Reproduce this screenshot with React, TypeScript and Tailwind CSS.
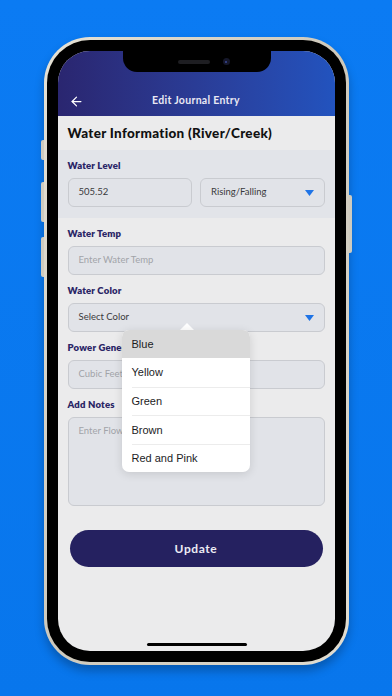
import { ArrowLeft } from 'lucide-react'

const colors = ['Blue', 'Yellow', 'Green', 'Brown', 'Red and Pink']

function Label({ children }: { children: string }) {
  return (
    <div className="h-[12px] text-[9.5px] leading-[12px] font-extrabold tracking-[0.2px] text-[#2a2566]">
      {children}
    </div>
  )
}

function Caret() {
  return (
    <svg width="9" height="6" viewBox="0 0 9 6" className="shrink-0">
      <path d="M0 0h9L4.5 6z" fill="#1f74e6" />
    </svg>
  )
}

function Field({
  text,
  muted,
  caret,
  className = '',
}: {
  text: string
  muted?: boolean
  caret?: boolean
  className?: string
}) {
  return (
    <div
      className={`flex h-[29px] items-center justify-between rounded-[6px] border border-[#c9cbd0] bg-[#e1e3e8] px-[10px] text-[9.5px] ${
        muted ? 'text-[#a2a4a9]' : 'text-[#3a3a3c]'
      } ${className}`}
    >
      <span>{text}</span>
      {caret && <Caret />}
    </div>
  )
}

export default function App() {
  return (
    <div
      className="h-[696px] w-[392px] overflow-hidden bg-gradient-to-b from-[#0b7bf3] to-[#0876ec] pt-[37px]"
      style={{ fontFamily: 'Lato, "Liberation Sans", sans-serif' }}
    >
      <div className="relative mx-auto h-[628px] w-[305px]">
        {/* side buttons */}
        <div className="absolute top-[103px] -left-[3px] h-[20px] w-[3px] rounded-l-[2px] bg-[#cfcbbf]" />
        <div className="absolute top-[145px] -left-[3px] h-[40px] w-[3px] rounded-l-[2px] bg-[#cfcbbf]" />
        <div className="absolute top-[200px] -left-[3px] h-[40px] w-[3px] rounded-l-[2px] bg-[#cfcbbf]" />
        <div className="absolute top-[158px] -right-[3px] h-[58px] w-[3px] rounded-r-[2px] bg-[#cfcbbf]" />

        <div className="h-full w-full rounded-[46px] bg-gradient-to-br from-[#e6e2d6] via-[#cdc8bb] to-[#e2ddd0] p-[3px] shadow-[0_6px_10px_rgba(0,0,0,0.25)]">
          <div className="h-full w-full rounded-[43px] bg-black p-[11px]">
            <div className="relative flex h-full w-full flex-col overflow-hidden rounded-[32px] bg-[#ebebec]">
              {/* header */}
              <div className="flex h-[65px] shrink-0 items-end bg-gradient-to-r from-[#2a2670] to-[#2253be] pb-[1px]">
                <div className="relative flex h-[28px] w-full items-center justify-center">
                  <ArrowLeft size={15} strokeWidth={2} className="absolute left-[11px] text-white" />
                  <span className="text-[10.5px] font-bold tracking-[0.3px] text-[#e9e8f3]">
                    Edit Journal Entry
                  </span>
                </div>
              </div>

              {/* notch */}
              <div className="absolute top-0 left-[65px] flex h-[21px] w-[148px] items-center justify-center gap-[13px] rounded-b-[14px] bg-black pl-[14px]">
                <div className="h-[4px] w-[32px] rounded-full bg-[#1e1e22]" />
                <div className="flex h-[7px] w-[7px] items-center justify-center rounded-full bg-[#15172a]">
                  <div className="h-[2px] w-[2px] rounded-full bg-[#3a4a9a]" />
                </div>
              </div>

              {/* section title */}
              <div className="flex h-[34px] shrink-0 items-center px-[10px] text-[13.5px] font-black tracking-[0.3px] text-[#111]">
                Water Information (River/Creek)
              </div>

              {/* water level band */}
              <div className="shrink-0 bg-[#e2e4e9] px-[10px] pt-[10px] pb-[11px]">
                <Label>Water Level</Label>
                <div className="mt-[6px] flex gap-[8px]">
                  <Field text="505.52" className="flex-1" />
                  <Field text="Rising/Falling" caret className="flex-1" />
                </div>
              </div>

              {/* rest of form */}
              <div className="flex flex-col px-[10px] pt-[10px]">
                <Label>Water Temp</Label>
                <Field text="Enter Water Temp" muted className="mt-[6px]" />

                <div className="mt-[10px]">
                  <Label>Water Color</Label>
                </div>
                <Field text="Select Color" caret className="mt-[6px]" />

                <div className="mt-[10px]">
                  <Label>Power Generation</Label>
                </div>
                <Field text="Cubic Feet Per Second" muted className="mt-[6px]" />

                <div className="mt-[10px]">
                  <Label>Add Notes</Label>
                </div>
                <div className="mt-[6px] h-[89px] rounded-[6px] border border-[#c9cbd0] bg-[#e1e3e8] px-[10px] pt-[6px] text-[9.5px] text-[#a2a4a9]">
                  Enter Flow Notes
                </div>

                <button className="mx-[2px] mt-[24px] h-[37px] rounded-full bg-[#252160] text-[12px] font-bold tracking-[0.6px] text-[#ecebf4]">
                  Update
                </button>
              </div>

              {/* home indicator */}
              <div className="absolute bottom-[5px] left-[89px] h-[3px] w-[100px] rounded-full bg-black" />

              {/* dropdown popover */}
              <div className="absolute top-[272px] left-[122px] h-0 w-0 border-x-[7px] border-b-[7px] border-x-transparent border-b-white" />
              <div
                className="absolute top-[279px] left-[64px] w-[128px] overflow-hidden rounded-[7px] bg-white shadow-[0_2px_10px_rgba(0,0,0,0.12)]"
                style={{ fontFamily: '"Liberation Sans", Arial, sans-serif' }}
              >
                {colors.map((c, i) => (
                  <div key={c} className={i === 0 ? 'bg-[#d9d9d9]' : ''}>
                    <div
                      className={`ml-[10px] flex h-[28.4px] items-center text-[11px] text-[#1c1c1e] ${
                        i > 1 ? 'border-t border-[#ececec]' : ''
                      }`}
                    >
                      {c}
                    </div>
                  </div>
                ))}
              </div>
            </div>
          </div>
        </div>
      </div>
    </div>
  )
}
